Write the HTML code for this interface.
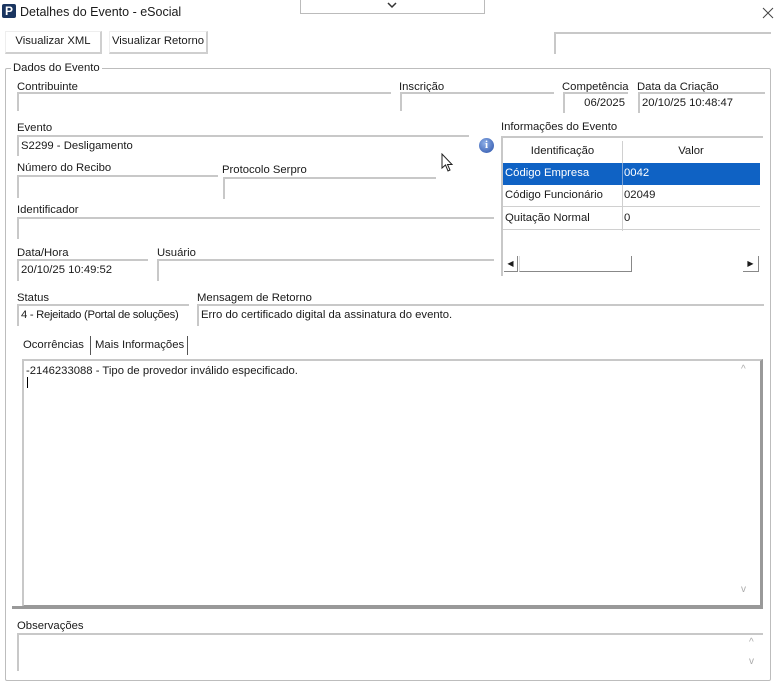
<!DOCTYPE html>
<html><head><meta charset="utf-8"><style>
*{margin:0;padding:0;box-sizing:border-box}
body{width:781px;height:682px;background:#fff;position:relative;overflow:hidden;font-family:"Liberation Sans",sans-serif;font-size:11.3px;color:#1a1a1a}
.a{position:absolute;white-space:nowrap}
.f{position:absolute;border-top:2px solid #c8c8c8;border-left:2px solid #c8c8c8;padding:3px 0 0 2px;white-space:nowrap;overflow:hidden}
.l{position:absolute;white-space:nowrap;margin-top:2px}
.btn{position:absolute;border-right:2px solid #cfcfcf;border-bottom:2px solid #cfcfcf;border-left:1px solid #eee;border-top:1px solid #eee;text-align:center;line-height:19px}
.row{position:absolute;left:503px;width:257px;height:22px;border-bottom:1px solid #d0d0d0;line-height:20px}
.row span{position:absolute;top:0}
</style></head><body>
<div class="a" style="left:2px;top:4px;width:14px;height:14px;background:#1a3560;color:#fff;font-weight:bold;font-size:12px;line-height:14px;text-align:center;border-radius:2px">P</div>
<div class="a" style="left:20px;top:5px;font-size:12.5px">Detalhes do Evento - eSocial</div>
<div class="a" style="left:300px;top:0;width:185px;height:14px;border:1px solid #bbb;border-top:none"></div>
<svg class="a" style="left:387px;top:2px" width="10" height="7"><path d="M1 1 L5 5 L9 1" stroke="#333" stroke-width="1.5" fill="none"/></svg>
<svg class="a" style="left:762px;top:7px" width="12" height="12"><path d="M1 1 L11 11 M11 1 L1 11" stroke="#444" stroke-width="1" fill="none"/></svg>
<div class="btn" style="left:5px;top:31px;width:97px;height:23px">Visualizar XML</div>
<div class="btn" style="left:109px;top:31px;width:99px;height:23px">Visualizar Retorno</div>
<div class="f" style="left:554px;top:32px;width:217px;height:22px"></div>
<div class="a" style="left:5px;top:68px;width:766px;height:613px;border:1px solid #bdbdbd;border-radius:2px"></div>
<div class="a" style="left:11px;top:62px;background:#fff;padding:0 2px">Dados do Evento</div>
<div class="l" style="left:17px;top:79px">Contribuinte</div>
<div class="f" style="left:17px;top:92px;width:374px;height:19px"></div>
<div class="l" style="left:399px;top:79px">Inscrição</div>
<div class="f" style="left:400px;top:92px;width:154px;height:19px"></div>
<div class="l" style="left:562px;top:79px">Competência</div>
<div class="f" style="left:563px;top:92px;width:65px;height:21px;text-align:right;padding-right:3px">06/2025</div>
<div class="l" style="left:637px;top:79px">Data da Criação</div>
<div class="f" style="left:638px;top:92px;width:127px;height:21px">20/10/25 10:48:47</div>
<div class="l" style="left:17px;top:120px">Evento</div>
<div class="f" style="left:17px;top:135px;width:452px;height:21px">S2299 - Desligamento</div>
<div class="a" style="left:479px;top:138px;width:15px;height:15px;border-radius:50%;background:radial-gradient(circle at 40% 35%,#8fb0e8,#2850a8);color:#fff;font-weight:bold;font-size:11px;text-align:center;line-height:15px;font-family:'Liberation Serif',serif">i</div>
<svg class="a" style="left:441px;top:153px" width="14" height="20"><path d="M1 1 L1 15 L4.5 12 L7 18 L9 17 L6.5 11.5 L11 11.5 Z" fill="#fff" stroke="#222" stroke-width="1"/></svg>
<div class="l" style="left:501px;top:119px">Informações do Evento</div>
<div class="a" style="left:501px;top:136px;width:262px;border-top:2px solid #c8c8c8"></div>
<div class="a" style="left:501px;top:136px;height:140px;border-left:2px solid #c8c8c8"></div>
<div class="row" style="top:141px;text-align:center;border-bottom:none"><span style="left:0;width:119px">Identificação</span><span style="left:119px;width:138px">Valor</span></div>
<div class="a" style="left:622px;top:141px;height:90px;border-left:1px solid #d0d0d0"></div>
<div class="row" style="top:163px;background:#0f62c4;color:#fff;border-bottom:none"><span style="left:2px">Código Empresa</span><span style="left:121px">0042</span></div>
<div class="a" style="left:622px;top:163px;height:22px;border-left:1px solid #7da3d6"></div>
<div class="row" style="top:185px"><span style="left:2px">Código Funcionário</span><span style="left:121px">02049</span></div>
<div class="row" style="top:208px"><span style="left:2px">Quitação Normal</span><span style="left:121px">0</span></div>
<div class="a" style="left:504px;top:256px;width:14px;height:16px;border-right:1px solid #888;border-bottom:1px solid #888;font-size:8px;line-height:16px;text-align:center">◀</div>
<div class="a" style="left:519px;top:256px;width:113px;height:16px;border-right:1px solid #888;border-bottom:1px solid #888;border-left:1px solid #ddd"></div>
<div class="a" style="left:743px;top:256px;width:16px;height:16px;border-right:1px solid #888;border-bottom:1px solid #888;font-size:8px;line-height:16px;text-align:center">▶</div>
<div class="l" style="left:17px;top:160px">Número do Recibo</div>
<div class="f" style="left:17px;top:175px;width:201px;height:23px"></div>
<div class="l" style="left:222px;top:162px">Protocolo Serpro</div>
<div class="f" style="left:223px;top:177px;width:213px;height:22px"></div>
<div class="l" style="left:17px;top:202px">Identificador</div>
<div class="f" style="left:17px;top:217px;width:477px;height:22px"></div>
<div class="l" style="left:17px;top:245px">Data/Hora</div>
<div class="f" style="left:17px;top:259px;width:131px;height:22px">20/10/25 10:49:52</div>
<div class="l" style="left:157px;top:245px">Usuário</div>
<div class="f" style="left:157px;top:259px;width:337px;height:22px"></div>
<div class="l" style="left:17px;top:290px">Status</div>
<div class="f" style="left:17px;top:304px;width:172px;height:22px;letter-spacing:-0.3px">4 - Rejeitado (Portal de soluções)</div>
<div class="l" style="left:197px;top:290px">Mensagem de Retorno</div>
<div class="f" style="left:197px;top:304px;width:567px;height:22px">Erro do certificado digital da assinatura do evento.</div>
<div class="l" style="left:23px;top:337px">Ocorrências</div>
<div class="a" style="left:90px;top:336px;height:19px;border-left:1px solid #555"></div>
<div class="l" style="left:95px;top:337px">Mais Informações</div>
<div class="a" style="left:187px;top:336px;height:19px;border-left:1px solid #555"></div>
<div class="f" style="left:22px;top:359px;width:741px;height:249px;border-right:3px solid #999;border-bottom:3px solid #999;padding-top:4px">-2146233088 - Tipo de provedor inválido especificado.<br><span style="display:inline-block;width:1px;height:11px;background:#000;margin-left:1px"></span></div>
<div class="a" style="left:12px;top:606px;width:751px;border-top:3px solid #999"></div>
<div class="a" style="left:741px;top:364px;color:#aaa;font-size:10px">^</div>
<div class="a" style="left:741px;top:584px;color:#aaa;font-size:10px">v</div>
<div class="l" style="left:17px;top:618px">Observações</div>
<div class="f" style="left:17px;top:633px;width:746px;height:38px"></div>
<div class="a" style="left:749px;top:637px;color:#aaa;font-size:10px">^</div>
<div class="a" style="left:749px;top:656px;color:#aaa;font-size:10px">v</div>
</body></html>
